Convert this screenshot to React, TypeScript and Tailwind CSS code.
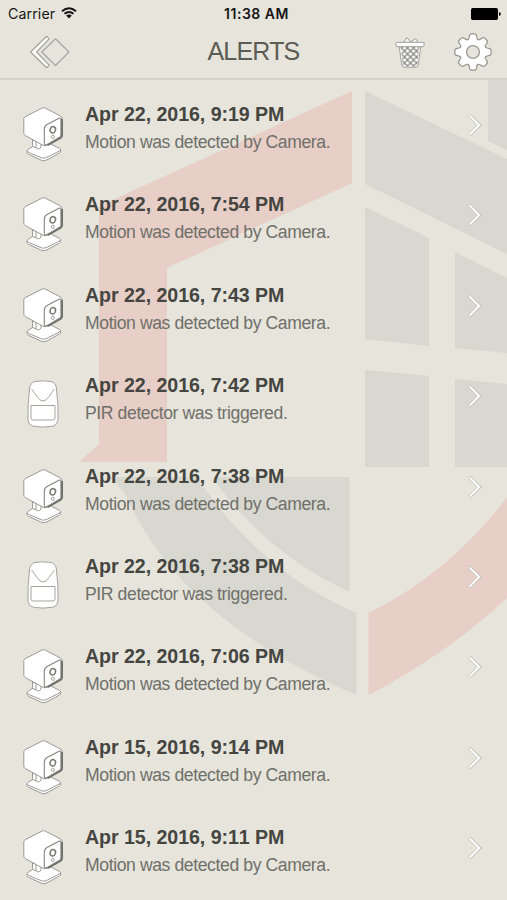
import React from 'react';

type Device = 'camera' | 'pir';

interface Alert {
  id: number;
  time: string;
  device: Device;
}

const alerts: Alert[] = [
  { id: 1, time: 'Apr 22, 2016, 9:19 PM', device: 'camera' },
  { id: 2, time: 'Apr 22, 2016, 7:54 PM', device: 'camera' },
  { id: 3, time: 'Apr 22, 2016, 7:43 PM', device: 'camera' },
  { id: 4, time: 'Apr 22, 2016, 7:42 PM', device: 'pir' },
  { id: 5, time: 'Apr 22, 2016, 7:38 PM', device: 'camera' },
  { id: 6, time: 'Apr 22, 2016, 7:38 PM', device: 'pir' },
  { id: 7, time: 'Apr 22, 2016, 7:06 PM', device: 'camera' },
  { id: 8, time: 'Apr 15, 2016, 9:14 PM', device: 'camera' },
  { id: 9, time: 'Apr 15, 2016, 9:11 PM', device: 'camera' },
];

const messages: Record<Device, string> = {
  camera: 'Motion was detected by Camera.',
  pir: 'PIR detector was triggered.',
};

// Shield artwork behind the list
function ShieldBackground() {
  return (
    <svg className="absolute inset-0 pointer-events-none" width="507" height="900" viewBox="0 0 507 900">
      <g fill="#e7cec7">
        <path d="M352 91V183L167 268V462H79L99 444V206Z" />
        <path d="M368.5 613Q450 573 507 497V598Q446 655 368.5 695Z" />
      </g>
      <g fill="#d8d8d0">
        <path d="M488 80H507V150L488 141Z" />
        <path d="M365 91L507 159V254L365 184Z" />
        <path d="M365 207L429 238V346L365 339Z" />
        <path d="M455 252L507 278V353L455 348Z" />
        <path d="M365 370L429 376V467H365Z" />
        <path d="M455 379L507 384V467H455Z" />
        <path d="M212 477H349.5V592Q264 552 212 477Z" />
        <path d="M109 477H197Q260 572 356.5 613V695Q190 624 133 510Q127 492 109 477Z" />
      </g>
    </svg>
  );
}

function WifiIcon() {
  return (
    <svg width="16" height="12" viewBox="0 0 16 12" fill="none" stroke="#111" strokeWidth="1.9">
      <path d="M1 4.2Q8 -1.9 15 4.2" />
      <path d="M3.5 6.8Q8 3 12.5 6.8" />
      <path d="M8 11.4L5.2 8.6Q8 6.4 10.8 8.6Z" fill="#111" stroke="none" />
    </svg>
  );
}

function BatteryIcon() {
  return (
    <svg width="30" height="12" viewBox="0 0 30 12">
      <rect x="0" y="0" width="27" height="12" rx="1.8" fill="#000" />
      <path d="M28 4Q29.8 4.3 29.8 6T28 8Z" fill="#000" />
    </svg>
  );
}

function BackIcon() {
  return (
    <svg width="42" height="36" viewBox="0 0 42 36" stroke="#a5a59f" strokeWidth="1.2" strokeLinejoin="round">
      <path d="M17.6 2.2L20.2 4.8L7.6 18L20.2 31.2L17.6 33.8L1.6 18Z" fill="#fbfbf8" />
      <path d="M26.5 4.8L40 18L26.5 31.5L12.8 18Z" fill="none" />
    </svg>
  );
}

function TrashIcon() {
  return (
    <svg width="30" height="34" viewBox="0 0 30 34" stroke="#96968f" strokeWidth="0.9" strokeLinejoin="round">
      <defs>
        <pattern id="mesh" x="0.5" y="1" width="6" height="6" patternUnits="userSpaceOnUse">
          <path d="M-1 -1L7 7M7 -1L-1 7" stroke="#8b8b86" strokeWidth="1.3" />
        </pattern>
      </defs>
      <path d="M8 8L12 2.5L16 7.5Z" fill="#f4f4f0" />
      <path d="M14.5 8L20.5 3.5L23.5 8Z" fill="#f4f4f0" />
      <path d="M4 10L6.8 30Q7.3 32.2 9 32.2H21Q22.7 32.2 23.2 30L26 10Z" fill="#fff" />
      <path d="M5.5 11H24.5L22 31.5H8Z" fill="url(#mesh)" stroke="none" />
      <rect x="1" y="7.3" width="28" height="4.4" rx="1" fill="#fff" />
    </svg>
  );
}

const TOOTH = 'M-6 -10.5Q-3.3 -12 -3 -15.5Q-2.8 -17.5 -1.5 -17.5H1.5Q2.8 -17.5 3 -15.5Q3.3 -12 6 -10.5Z';

function GearIcon() {
  const teeth = [0, 45, 90, 135, 180, 225, 270, 315];
  return (
    <svg width="38" height="38" viewBox="-19 -19 38 38">
      {/* stroked pass first, then plain white on top, which leaves only the outer outline */}
      <g fill="#fff" stroke="#96968f" strokeWidth="2.4" strokeLinejoin="round">
        <circle r="11.8" />
        {teeth.map((a) => (
          <path key={a} d={TOOTH} transform={`rotate(${a})`} />
        ))}
      </g>
      <g fill="#fff">
        <circle r="11.8" />
        {teeth.map((a) => (
          <path key={a} d={TOOTH} transform={`rotate(${a})`} />
        ))}
      </g>
      <circle r="6.4" fill="#e6e4db" stroke="#9c9c96" strokeWidth="1.4" />
    </svg>
  );
}

function CameraIcon() {
  return (
    <svg width="42" height="56" viewBox="0 0 42 56" fill="#fff" stroke="#9a9a95" strokeWidth="1" strokeLinejoin="round">
      {/* stand */}
      <path d="M6.5 43Q5 44 5 45.5V46.5Q5 47.5 6.5 48.3L19.5 54.3Q21.8 55.2 24 54.3L37.5 47Q38.6 46.3 38.6 45V44Q38.6 43 37.5 42.4L27 37L14 38.5Z" />
      <path d="M5.3 45.2Q5.8 46 7 46.6L19.5 51.8Q21.8 52.6 24 51.7L37 45.2Q38.2 44.6 38.5 43.6" fill="none" />
      <path d="M10.5 34V39.5Q11 41.5 14 41.8L15.5 42.8Q18 43.2 19 41V37Z" />
      <path d="M14 36V41.8" fill="none" />
      {/* body */}
      <path d="M20 2.1Q21.6 1.2 23.2 2.1L38.5 10Q40 11 40 12.5V29Q40 30.6 38.8 31.4L25 39.3Q23 40.2 21 39.3L3.2 29.5Q1.8 28.5 1.8 27V12.8Q1.8 11.5 3.2 10.7Z" />
      {/* front plate */}
      <path d="M40 13V29.5Q40 30.8 38.8 31.6L25.5 39.3" fill="none" stroke="#6c6c68" strokeWidth="1.9" />
      <path d="M22.3 37.5V23.5Q22.3 20 25 18.6L37 12.3Q38.9 11.5 38.9 13.5V29Q38.9 30.2 37.8 30.9L24.8 38.6Q22.3 39.6 22.3 37.5Z" stroke="#85857f" strokeWidth="1.1" />
      <ellipse cx="30.8" cy="23.8" rx="2.7" ry="3.2" transform="rotate(18 30.8 23.8)" stroke="#777772" strokeWidth="1.5" />
      <ellipse cx="30.9" cy="30.8" rx="1.5" ry="1.6" stroke="#a0a09a" />
    </svg>
  );
}

function PirIcon() {
  return (
    <svg width="32" height="48" viewBox="0 0 32 48" fill="#fff" stroke="#a3a39d" strokeWidth="1" strokeLinejoin="round">
      <path d="M8 1.5Q16 0.2 24 1.5Q28.5 2.5 29.4 8Q31.5 25 31 40Q30.5 45 26 46.2Q16 48 6 46.2Q1.5 45 1 40Q0.5 25 2.6 8Q3.5 2.5 8 1.5Z" />
      <path d="M4.5 9Q7 12 10 16.5Q13 21 16 21Q19 21 22 16.5Q25 12 27.5 9" fill="none" />
      <path d="M4 25.5H28V38Q28 40 26 40H6Q4 40 4 38Z" />
    </svg>
  );
}

function Chevron() {
  return (
    <svg width="16" height="24" viewBox="0 0 16 24" fill="none">
      <path d="M2.2 2L12.6 12L2.2 22" stroke="#c3c3bc" strokeWidth="3.6" />
      <path d="M2.5 2.4L12.2 12L2.5 21.6" stroke="#fff" strokeWidth="2" />
    </svg>
  );
}

function AlertRow({ alert }: { alert: Alert }) {
  return (
    <li className="flex h-[90.4px] shrink-0">
      <div className="flex w-[85px] shrink-0 justify-center pt-[26px]">
        {alert.device === 'camera' ? <CameraIcon /> : <div className="pt-[3px] pl-px"><PirIcon /></div>}
      </div>
      <div className="flex-1 pt-[20px] whitespace-nowrap [font-kerning:none]">
        <p className="text-[19.6px] leading-[28px] font-bold tracking-[-0.05px] text-[#454541]">{alert.time}</p>
        <p className="text-[17.6px] leading-[28px] tracking-[-0.4px] text-[#70706a]">{messages[alert.device]}</p>
      </div>
      <div className="w-[40px] pt-[33px]">
        <Chevron />
      </div>
    </li>
  );
}

export default function App() {
  return (
    <div className="relative h-[900px] w-[507px] overflow-hidden bg-[#e6e4db] font-['Liberation_Sans',Arial,sans-serif]">
      <ShieldBackground />

      <div className="relative flex h-full flex-col">
        <header className="h-[80px] shrink-0 border-b-2 border-[#d4d3cb] bg-[#e6e4db]">
          {/* Status bar */}
          <div className="grid h-[27px] grid-cols-3 items-center font-['Inter',sans-serif] text-[#161616]">
            <div className="flex items-center gap-[6px] pl-[8px] text-[14.2px]">
              <span className="tracking-[0.1px]">Carrier</span>
              <WifiIcon />
            </div>
            <span className="pl-[6px] text-center text-[14px] font-semibold tracking-[0.5px]">11:38 AM</span>
            <div className="flex justify-end pr-[6px]">
              <BatteryIcon />
            </div>
          </div>

          {/* Navigation bar */}
          <div className="flex h-[50px] items-center">
            <button className="w-[160px] pl-[29px]">
              <BackIcon />
            </button>
            <h1 className="w-[187px] text-center text-[25px] tracking-[-0.8px] text-[#5c5c56]">ALERTS</h1>
            <div className="flex flex-1 items-center justify-end gap-[29px] pr-[15px]">
              <button>
                <TrashIcon />
              </button>
              <button>
                <GearIcon />
              </button>
            </div>
          </div>
        </header>

        <ul className="flex flex-1 flex-col overflow-hidden">
          {alerts.map((alert) => (
            <AlertRow key={alert.id} alert={alert} />
          ))}
        </ul>
      </div>
    </div>
  );
}
